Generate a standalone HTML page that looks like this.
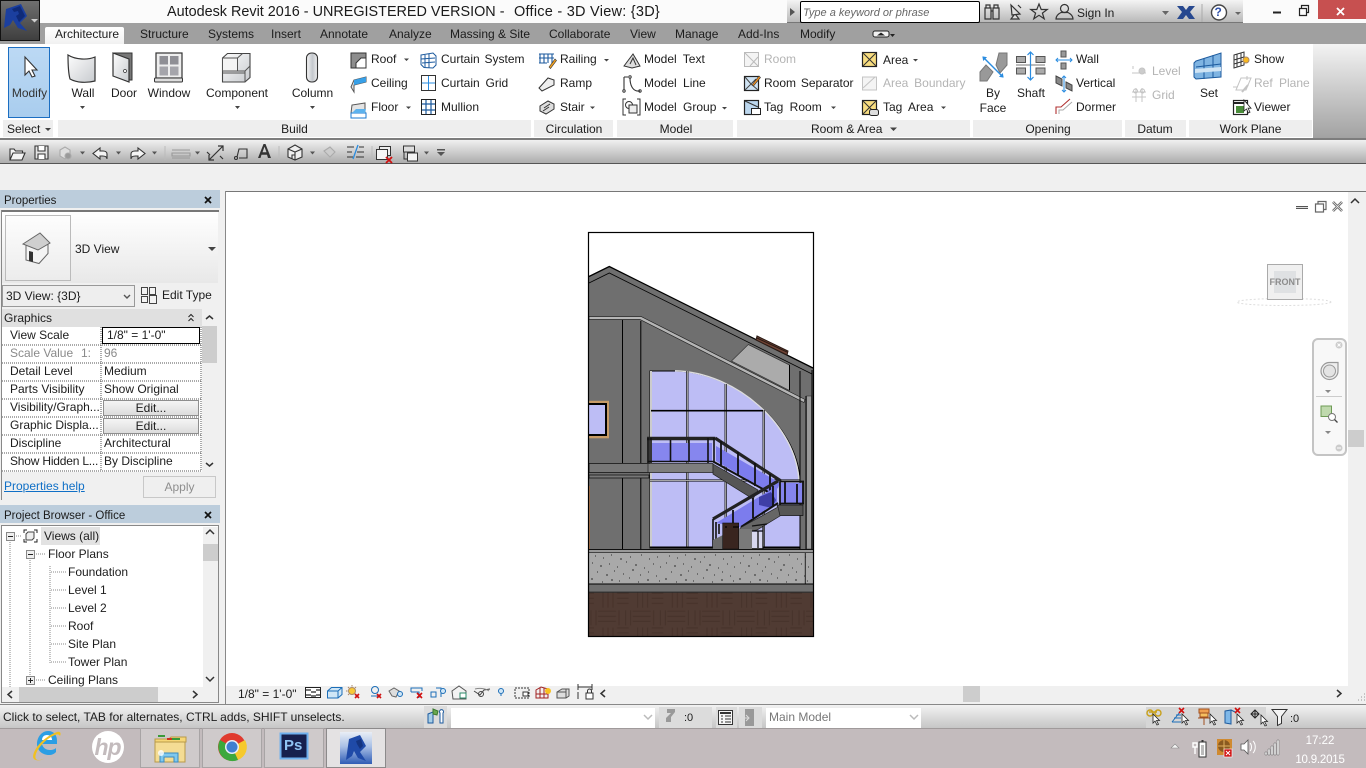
<!DOCTYPE html>
<html lang="en"><head><meta charset="utf-8"><title>Autodesk Revit 2016</title>
<style>
html,body{margin:0;padding:0;width:1366px;height:768px;overflow:hidden;background:#f0f0f0}
body{position:relative;font:12px/14px "Liberation Sans",sans-serif;color:#1c1c1c}
div{position:absolute}
svg{position:absolute;left:0;top:0}
i{position:absolute;font-style:normal;white-space:pre;line-height:14px;height:14px}
.g{color:#b4b4b4}.c{transform:translateX(-50%)}
.w{color:#fff}
</style></head><body>
<!-- backgrounds -->
<div style="left:0;top:0;width:1366px;height:23px;background:#fbfbfb"></div>
<div style="left:0;top:23px;width:1366px;height:21px;background:#a0a0a0"></div>
<div style="left:787px;top:0;width:456px;height:23px;background:linear-gradient(#f4f4f4,#b9b9b9);border-bottom:1px solid #777;box-sizing:border-box"></div>
<div style="left:800px;top:1px;width:180px;height:22px;background:#fff;border:1px solid #000;box-sizing:border-box;border-radius:2px"></div>
<div style="left:1318px;top:0;width:48px;height:19px;background:#c75050"></div>
<div style="left:45px;top:27px;width:79px;height:17px;background:linear-gradient(#fff,#f1f1f1);border-radius:2px 2px 0 0"></div>
<div style="left:0;top:44px;width:1366px;height:95px;background:#fff"></div>
<div style="left:1313px;top:44px;width:53px;height:94px;background:linear-gradient(#f3f3f3,#a2a2a2)"></div>
<!-- panel label strips -->
<div style="left:3px;top:120px;width:50px;height:17px;background:#eee"></div>
<div style="left:58px;top:120px;width:473px;height:17px;background:#eee"></div>
<div style="left:534px;top:120px;width:79px;height:17px;background:#eee"></div>
<div style="left:617px;top:120px;width:116px;height:17px;background:#eee"></div>
<div style="left:737px;top:120px;width:233px;height:17px;background:#eee"></div>
<div style="left:973px;top:120px;width:149px;height:17px;background:#eee"></div>
<div style="left:1125px;top:120px;width:61px;height:17px;background:#eee"></div>
<div style="left:1189px;top:120px;width:123px;height:17px;background:#eee"></div>
<div style="left:0;top:138px;width:1366px;height:2px;background:#7d7d7d"></div>
<div style="left:0;top:140px;width:1366px;height:23px;background:linear-gradient(#f0f0f0,#adadad)"></div>
<div style="left:0;top:163px;width:1366px;height:1px;background:#555"></div>
<div style="left:8px;top:47px;width:42px;height:71px;box-sizing:border-box;border:1px solid #1b6ec2;background:linear-gradient(#bcd9f4,#a9cdee)"></div>
<!-- Properties panel -->
<div style="left:0;top:190px;width:220px;height:18px;background:#bccddc"></div>
<div style="left:1px;top:210px;width:218px;height:2px;background:#777"></div>
<div style="left:1px;top:210px;width:1px;height:290px;background:#888"></div>
<div style="left:2px;top:212px;width:216px;height:71px;background:linear-gradient(#fff,#e8e8e8)"></div>
<div style="left:5px;top:215px;width:66px;height:66px;box-sizing:border-box;border:1px solid #bbb;background:linear-gradient(#fdfdfd,#ececec)"></div>
<div style="left:2px;top:285px;width:133px;height:22px;box-sizing:border-box;border:1px solid #999;background:#eee"></div>
<div style="left:2px;top:309px;width:200px;height:18px;background:#e0e0e0"></div>
<div style="left:2px;top:327px;width:200px;height:145px;background:#fff"></div>
<div style="left:202px;top:309px;width:16px;height:163px;background:#f0f0f0"></div>
<div style="left:202px;top:326px;width:15px;height:37px;background:#cdcdcd"></div>
<div style="left:102px;top:327px;width:98px;height:17px;box-sizing:border-box;border:1.5px solid #000;background:#fff"></div>
<div style="left:103px;top:400px;width:96px;height:16px;box-sizing:border-box;border:1.5px solid #8e8e8e;background:linear-gradient(#f5f5f5,#dcdcdc)"></div>
<div style="left:103px;top:418px;width:96px;height:16px;box-sizing:border-box;border:1.5px solid #8e8e8e;background:linear-gradient(#f5f5f5,#dcdcdc)"></div>
<div style="left:143px;top:476px;width:73px;height:22px;box-sizing:border-box;border:1px solid #c8c8c8;background:#efefef"></div>
<!-- Project browser -->
<div style="left:0;top:505px;width:220px;height:18px;background:#bccddc"></div>
<div style="left:1px;top:525px;width:218px;height:178px;box-sizing:border-box;border:1px solid #888;background:#fff"></div>
<div style="left:41px;top:527px;width:59px;height:18px;background:#e2e2e2"></div>
<div style="left:203px;top:527px;width:15px;height:160px;background:#f0f0f0"></div>
<div style="left:203px;top:544px;width:15px;height:17px;background:#cdcdcd"></div>
<div style="left:2px;top:687px;width:216px;height:15px;background:#f0f0f0"></div>
<div style="left:19px;top:687px;width:139px;height:15px;background:#cdcdcd"></div>
<!-- canvas -->
<div style="left:225px;top:191px;width:1141px;height:514px;background:#fff"></div>
<div style="left:225px;top:191px;width:1141px;height:1px;background:#777"></div>
<div style="left:225px;top:191px;width:1px;height:513px;background:#888"></div>
<div style="left:1348px;top:192px;width:18px;height:494px;background:#f0f0f0"></div>
<div style="left:1348px;top:430px;width:16px;height:17px;background:#cdcdcd"></div>
<div style="left:226px;top:686px;width:1140px;height:18px;background:#f0f0f0"></div>
<div style="left:963px;top:686px;width:17px;height:16px;background:#cdcdcd"></div>
<div style="left:1312px;top:338px;width:35px;height:118px;box-sizing:border-box;border:2px solid #c4c4c4;border-radius:6px;background:#f8f8f8"></div>
<!-- status -->
<div style="left:0;top:704px;width:1366px;height:1px;background:#888"></div>
<div style="left:0;top:705px;width:1366px;height:23px;background:linear-gradient(#f2f2f2,#c6c6c6)"></div>
<div style="left:424px;top:706px;width:23px;height:22px;background:#dcdcdc"></div>
<div style="left:451px;top:708px;width:204px;height:20px;background:#fff"></div>
<div style="left:659px;top:707px;width:53px;height:21px;background:#dcdcdc"></div>
<div style="left:716px;top:707px;width:21px;height:21px;background:#dcdcdc"></div>
<div style="left:739px;top:707px;width:23px;height:21px;background:#dcdcdc"></div>
<div style="left:766px;top:708px;width:155px;height:20px;background:#fff"></div>
<div style="left:1146px;top:707px;width:120px;height:21px;background:#d6d6d6"></div>
<!-- taskbar -->
<div style="left:0;top:728px;width:1366px;height:40px;background:#c3bbbd;border-top:1px solid #a09a9b;box-sizing:border-box"></div>
<div style="left:140px;top:728px;width:60px;height:40px;box-sizing:border-box;border:1px solid #a8a4a5;background:#cfcacb"></div>
<div style="left:202px;top:728px;width:60px;height:40px;box-sizing:border-box;border:1px solid #a8a4a5;background:#cfcacb"></div>
<div style="left:264px;top:728px;width:60px;height:40px;box-sizing:border-box;border:1px solid #a8a4a5;background:#cfcacb"></div>
<div style="left:326px;top:728px;width:60px;height:40px;box-sizing:border-box;border:1px solid #8c8a8b;background:#e4e2e3"></div>

<svg width="1366" height="768" viewBox="0 0 1366 768" fill="none">
<defs>
<linearGradient id="ab" x1="0" y1="0" x2="0" y2="1"><stop offset="0" stop-color="#707070"/><stop offset="1" stop-color="#3e3e3e"/></linearGradient>
<linearGradient id="wh" x1="0" y1="0" x2="1" y2="1"><stop offset="0" stop-color="#fdfdfd"/><stop offset="1" stop-color="#c8cbcf"/></linearGradient>
<linearGradient id="col" x1="0" y1="0" x2="1" y2="0"><stop offset="0" stop-color="#f7f7f7"/><stop offset=".55" stop-color="#c3c7cc"/><stop offset="1" stop-color="#f0f0f0"/></linearGradient>
<linearGradient id="rv" x1="0" y1="0" x2="0" y2="1"><stop offset="0" stop-color="#e9eef6"/><stop offset=".45" stop-color="#a9c0e6"/><stop offset="1" stop-color="#2f5cb5"/></linearGradient>
<pattern id="parq" x="588" y="592.3" width="34.67" height="34.67" patternUnits="userSpaceOnUse">
<path d="M15 .5v15M20 .5v15M25 .5v15M29 1h19M-6 1h12M29 6h19M-6 6h12M29 11h19M-6 11h12M10 19h18M10 24h18M10 29h18M31 18v15M3 18v15M-2 18v15M8 18v15M36 18v15" stroke="#46322a" stroke-width="1"/>
</pattern>
<pattern id="spk" x="589" y="553" width="74" height="31" patternUnits="userSpaceOnUse">
<path d="M6 3h1M14 5h1M22 2h1M31 6h2M41 4h1M52 2h1M60 6h1M68 4h1M3 10h1M11 13h2M20 11h1M28 14h1M37 9h1M46 12h2M55 15h1M64 11h1M71 14h1M8 19h1M17 22h2M25 18h1M34 21h1M43 17h2M51 22h1M59 19h1M67 23h1M2 26h2M13 29h1M22 27h2M30 28h1M40 25h1M49 29h1M58 27h2M70 28h1" stroke="#2e2e2e" stroke-width="1"/>
</pattern>
</defs>

<!-- app button -->
<rect x=".5" y=".5" width="39" height="40" fill="url(#ab)" stroke="#111"/>
<path d="M6 9 21 4l6 12-7 7 7 8-9-3-5-8-3 5-6 3z" fill="#1b3f9f"/><path d="M12 9l8-3 5 10-6 6-3-6 3-2-1-3-4 1z" fill="#0f2a78"/>
<path d="M31 19h7l-3.500 3.500z" fill="#cfcfcf"/>

<!-- window controls -->
<path d="M1273 12.500h8" stroke="#222" stroke-width="2"/>
<path d="M1299.500 8.500h7v7h-7zM1301.500 8V5.500h7v7H1307" stroke="#222" stroke-width="1.200"/>
<path d="M1337 8l7 7M1344 8l-7 7" stroke="#fff" stroke-width="1.800"/>

<!-- info bar icons -->
<path d="M790 8l5 4-5 4z" fill="#555"/>
<g stroke="#333" stroke-width="1.200">
<path d="M985 8h6v11h-6zM993 8h6v11h-6zM986 8V5h4v3M994 8V5h4v3M991 11h2"/>
<path d="M1011 5l9 9-8 1zM1014 15l-3 4h8l-3-4M1018 5l3 3" fill="#ddd"/>
<path d="M1039 4l2.200 5.500h6l-4.800 3.600 1.800 5.700-5.200-3.500-5.200 3.500 1.800-5.700-4.800-3.600h6z"/>
<circle cx="1064.500" cy="8.500" r="4"/><path d="M1056 19c0-4 4-6 5-6.500h7c1 .5 5 2.500 5 6.500z"/>
</g>
<path d="M1162 11h7l-3.500 4z" fill="#666"/>
<path d="M1177 6h6l3 4 3-4h6l-5 6 5 7h-6l-3-4-3 4h-6l5-7z" fill="#27488f"/>
<path d="M1202 4v18" stroke="#aaa"/>
<circle cx="1219" cy="12.500" r="7.500" fill="#fff" stroke="#444" stroke-width="1.400"/>
<path d="M1235 12h6l-3 3z" fill="#666"/>
<path d="M875 31h12a2 2 0 0 1 2 2v2a2 2 0 0 1-2 2h-12a2 2 0 0 1-2-2v-2a2 2 0 0 1 2-2z" fill="#f2f2f2" stroke="#222"/><path d="M877 35.500l4-3 4 3z" fill="#222"/><path d="M890 34h5l-2.500 3z" fill="#222"/>

<!-- Modify cursor -->
<path d="M25 57v18l4-4 3 6 3-1-3-6h5z" fill="#fff" stroke="#333" stroke-width="1.100"/>

<!-- Wall -->
<path d="M68 55c8 5 20 5 27 2v24c-8 2-18 2-25-2-2-7-2-16-2-24z" fill="url(#wh)" stroke="#333" stroke-width="1.200"/>
<!-- Door -->
<path d="M113 53h19v27h-3" fill="#777" stroke="#333"/><path d="M113 53l16 6v23l-16-6z" fill="url(#wh)" stroke="#333" stroke-width="1.200"/><circle cx="125" cy="71" r="1.500" fill="#fff" stroke="#333" stroke-width=".7"/>
<!-- Window -->
<rect x="156" y="53" width="26" height="25" fill="#eee" stroke="#333" stroke-width="1.200"/><rect x="159.500" y="56" width="8.500" height="8.500" fill="#8f8f95"/><rect x="170" y="56" width="8.500" height="8.500" fill="#8f8f95"/><rect x="159.500" y="66.500" width="8.500" height="9" fill="#a5a5ab"/><rect x="170" y="66.500" width="8.500" height="9" fill="#a5a5ab"/><rect x="154.500" y="78" width="28" height="4" rx="1" fill="#ddd" stroke="#333"/>
<!-- Component -->
<path d="M222.500 58l5-4.500h22.500v24l-5 4.500h-22.500z" fill="url(#wh)" stroke="#444" stroke-width="1.100"/><path d="M222.500 58h15v13h-15zM237.500 58l5-4.500" fill="#f4f4f4" stroke="#555"/><path d="M237.500 58v13h7.500v11M245 71l5-5M222.500 73h22" stroke="#555"/>
<!-- Column -->
<rect x="306.500" y="53" width="11" height="29" rx="5" fill="url(#col)" stroke="#333" stroke-width="1.100"/>

<!-- roof/ceiling/floor -->
<path d="M351 53h15v5h-5l-5 5v5h-5z" fill="#8d8d8d" stroke="#333"/><path d="M356 63v5h10V53" stroke="#333"/>
<path d="M351 87l3-7 12-3v5l-12 3v7z" fill="#e4e4e4" stroke="#555"/><path d="M354 80l12-3v5l-12 3z" fill="#37a0e8"/>
<path d="M351 113l1-8 13-2v9z" fill="#e4e4e4" stroke="#555"/><path d="M351 113h15v5h-15z" fill="#fff" stroke="#1a78d0"/><path d="M352 113l4-4h10l-1 4z" fill="#5cb2ee"/>
<!-- curtain -->
<g stroke="#1c5a9e" fill="none">
<path d="M421 55l12-2 3 3v9l-3 3-9-.5-3-3zM425 55v13M429 54v14M421 59l14-1M422 63l13-1"/>
<rect x="421.500" y="75.500" width="14" height="15" fill="#fff" stroke="#333"/><path d="M428.500 76v14M422 83h13" stroke="#2a8ce0"/>
<rect x="421.500" y="99.500" width="14" height="15" fill="#fff" stroke="#222"/><path d="M426 100v14M431 100v14M422 104h13M422 110h13" stroke="#1c5a9e" stroke-width="1.200"/>
</g>
<!-- circulation -->
<path d="M539 54h15M540 54v9M544 54v9M548 54v9M552 54v9M539 58h15M539 63h8" stroke="#1c5a9e" stroke-width="1.100"/><path d="M549 67l6-8 1.500 1.500-6 8z" fill="#f0a020" stroke="#333" stroke-width=".6"/>
<path d="M539 88l9-10 6 2v5l-12 6z" fill="#eee" stroke="#333"/>
<path d="M540 106l8-5 6 3v5l-8 5-6-3zM544 108l6-4M543 111l6-4" fill="#ddd" stroke="#333"/>
<!-- model -->
<path d="M624 66l9-12 7 12-8 2z" fill="#ddd" stroke="#333"/><path d="M630 64l3-6 3 7" stroke="#333"/>
<path d="M624 77v13M624 77h4M640 91c-8 1-10-7-10-13" stroke="#333" stroke-width="1.100"/><circle cx="624" cy="91" r="1.200" stroke="#333"/><circle cx="630" cy="77" r="1.200" stroke="#333"/><circle cx="640" cy="91" r="1.200" stroke="#333"/>
<path d="M626 99h-3v16h3M637 99h3v16h-3" stroke="#333"/><circle cx="629" cy="105" r="3.500" stroke="#333"/><rect x="629" y="105" width="8" height="8" fill="#eee" stroke="#333"/>
<!-- room & area -->
<g stroke="#bbb"><rect x="744.500" y="52.500" width="14" height="14" fill="#f4f4f4"/><path d="M745 53l13 13M758 57l-8 9"/></g>
<rect x="744.500" y="76.500" width="14" height="14" fill="#cfe3f3" stroke="#222" stroke-width="1.200"/><path d="M745 90l6-6 7 6M745 77l6 7 5-5" stroke="#444"/><path d="M752 85l7-9 1.500 1.500-7 8.500z" fill="#f09020" stroke="#333" stroke-width=".6"/>
<rect x="744.500" y="100.500" width="14" height="14" fill="#bcd7ee" stroke="#222" stroke-width="1.200"/><path d="M745 101l13 6" stroke="#333"/><rect x="751.500" y="108.500" width="9" height="6" fill="#fff" stroke="#222"/>
<rect x="862.500" y="52.500" width="14" height="14" fill="#f8dd80" stroke="#222" stroke-width="1.200"/><path d="M863 53l13 13M876 53l-13 13" stroke="#333"/>
<g stroke="#c4c4c4"><rect x="862.500" y="77" width="14" height="13" fill="#f4f4f4"/><path d="M863 88l12-11"/></g>
<rect x="862.500" y="100.500" width="14" height="14" fill="#f8dd80" stroke="#222" stroke-width="1.200"/><path d="M863 101l13 13M876 101l-13 13" stroke="#333"/><rect x="869.500" y="109.500" width="9" height="6" rx="2" fill="#ddd" stroke="#222"/>
<!-- opening -->
<path d="M980 72l6-7 7 7-6 9h-7zM996 65l3-12h8v12l-7 8z" fill="#999" stroke="#777"/><path d="M983 57l20 20" stroke="#2a8ce0" stroke-width="1.400"/><path d="M983 57l3 .5-2.500 2.500zM1003 77l-3-.5 2.500-2.500z" fill="#2a8ce0" stroke="#2a8ce0"/>
<rect x="1016.500" y="56.500" width="9" height="6" fill="#aaa" stroke="#555"/><rect x="1036" y="56.500" width="9" height="6" fill="#aaa" stroke="#555"/><rect x="1016.500" y="68" width="9" height="6" fill="#aaa" stroke="#555"/><rect x="1036" y="68" width="9" height="6" fill="#aaa" stroke="#555"/>
<path d="M1016 65h29" stroke="#bbb" stroke-width="2"/><path d="M1030.500 52v28M1027.500 55l3-3 3 3M1027.500 77l3 3 3-3" stroke="#2a8ce0" stroke-width="1.200"/>
<path d="M1061 51h5v6h-5zM1061 63h5v6h-5z" fill="#999" stroke="#555"/><path d="M1056 60h16M1058 58l-2 2 2 2M1070 58l2 2-2 2" stroke="#2a8ce0"/>
<path d="M1056 76l6 3v7l-6-3zM1066 82l6 3v6l-6-3z" fill="#888" stroke="#444"/><path d="M1064 76v16M1062 78l2-2 2 2M1062 90l2 2 2-2" stroke="#2a8ce0"/>
<path d="M1056 114v-7h5l9-8" stroke="#b03030" stroke-width="1.100"/><path d="M1059 114v-4h4l9-8" stroke="#aaa"/>
<!-- datum -->
<g stroke="#c4c4c4"><path d="M1132 73h14M1133 66v3"/><circle cx="1142" cy="71" r="3" fill="#ccc"/><path d="M1132 92h14M1132 97h14M1136 88v14M1142 88v14"/><circle cx="1135.500" cy="91" r="2"/><circle cx="1142.500" cy="91" r="2"/></g>
<!-- work plane -->
<path d="M1196 61l25-8v24l-25 2-2-2V63z" fill="#7fb4e2" stroke="#1c5a9e"/><path d="M1204 58v21M1213 55v23M1196 67l25-3M1196 72l25-2" stroke="#1c5a9e"/><path d="M1195 69l26-2v4l-26 2z" fill="#d0e4f4"/>
<path d="M1234 55l10-3v13l-10 3zM1237 54v13M1241 53v13M1234 60l10-3M1234 64l10-3" stroke="#333"/><circle cx="1246" cy="60" r="3" fill="#f8b820" stroke="#a86"/>
<g stroke="#c4c4c4"><path d="M1236 90l5-12h10l-5 12zM1233 87h4M1247 76v4"/><path d="M1242 92l6-7" stroke-width="2"/></g>
<rect x="1233.500" y="100.500" width="14" height="14" fill="#fff" stroke="#222" stroke-width="1.200"/><path d="M1236 106h8v7h-8z" fill="#4a8c3a"/><path d="M1233 103h14" stroke="#222" stroke-width="2"/><path d="M1244 100v11l2.500-2 2 4 1.500-.8-2-4h3z" fill="#fff" stroke="#222" stroke-width=".8"/>

<!-- dropdown arrows ribbon -->
<g fill="#444">
<path d="M404 58.500h5l-2.500 2.500zM406 106.500h5l-2.500 2.500zM604 59h5l-2.500 2.500zM590 106.500h5l-2.500 2.500zM722 107h5l-2.500 2.500zM831 106.500h5l-2.500 2.500zM913 59h5l-2.500 2.500zM941 106.500h5l-2.500 2.500zM80 106h5l-2.500 3zM235 106h5l-2.500 3zM310 106h5l-2.500 3zM45 128h6l-3 3zM890 127.500h7l-3.500 3.500z"/>
</g>

<!-- QAT -->
<g stroke="#333" stroke-width="1.100">
<path d="M10 160v-11h4l1.500 2h7v2M10 160l3-7h12l-3 7z" fill="#f4f4f4"/>
<path d="M35 146h13v13h-13z" fill="#e4e4e4"/><path d="M38 146v5h7v-5M38 159v-5h7v5" fill="#fff"/>
<path d="M60 150l5-3 5 3v6l-5 3-5-3z" stroke="#aaa" fill="#ddd"/><circle cx="68" cy="156" r="3" fill="#999" stroke="#aaa"/>
<path d="M107 158v-4c0-2-2-3-4-3h-3v-3l-7 5.500 7 5.500v-3h2.500c2.500 0 4.500 1 4.500 3" fill="#f4f4f4"/>
<path d="M131 158v-4c0-2 2-3 4-3h3v-3l7 5.500-7 5.500v-3h-2.500c-2.500 0-4.500 1-4.500 3" fill="#f4f4f4"/>
<path d="M172 150h18M172 158h18M172 153h18v3h-18z" stroke="#999"/>
<path d="M209 160l14-14M209 155v5h5M218 146h5v5M207 152l3 3M220 156l3 3" stroke-width="1.200"/>
<circle cx="236" cy="158" r="1.500"/><path d="M237 157l2-8h8v9h-8"/>
</g>
<path d="M258 158l5.500-14h2l5.500 14h-3l-1-3.200h-5.500l-1 3.200zM262.500 152.300h4l-2-5.500z" fill="#333"/>
<g stroke="#333" stroke-width="1.100">
<path d="M288 149l7-4 7 4v8l-7 3-7-3z" fill="#eee"/><path d="M288 149l7 3 7-3M295 152v8M292 159v-4h3v5" />
<path d="M324 151l6-4 5 5-5 5z" stroke="#aaa" fill="#ccc"/>
<path d="M347 147h7M347 152h5M347 157h6M359 147h5M357 152h7M356 157h8"/>
</g>
<path d="M358 145l-5 14" stroke="#2a8ce0" stroke-width="1.300"/>
<g stroke="#333"><rect x="379.500" y="146.500" width="11" height="9" fill="#eee"/><rect x="376.500" y="149.500" width="11" height="10" fill="#f6f6f6"/><path d="M404 150h10v-4M404 150v9h9"/><rect x="403.500" y="146" width="11" height="6" fill="#ddd"/><rect x="407.500" y="153" width="10" height="8" fill="#f4f4f4"/></g>
<path d="M386 157l6 6M392 157l-6 6" stroke="#d01010" stroke-width="1.800"/>
<g fill="#555"><path d="M80 151.500h5l-2.500 3zM116 151.500h5l-2.500 3zM152 151.500h5l-2.500 3zM195 151.500h5l-2.500 3zM310 151.500h5l-2.500 3zM424 151.500h5l-2.500 3zM437 152h8l-4 4zM437 149h8v1.500h-8z"/></g>
<path d="M165 146v14M279 146v14M372 146v14" stroke="#bbb"/>

<!-- Properties extras -->
<path d="M205 197l6 6M211 197l-6 6M205 512l6 6M211 512l-6 6" stroke="#111" stroke-width="1.700"/>
<path d="M208 247h8l-4 4z" fill="#444"/>
<!-- house icon -->
<path d="M26 245v15l13 3.500 9-10v-10l-9 5z" fill="#f4f4f4" stroke="#666"/><path d="M23 244l17-11 10 10-12 7z" fill="#cfcfcf" stroke="#666"/><path d="M29 251v10l4 1v-10z" fill="#333"/>
<path d="M124 295l3 3 3-3" stroke="#555" stroke-width="1.400"/>
<g stroke="#444"><rect x="141.500" y="287.500" width="6" height="7" fill="#f4f4f4"/><rect x="149.500" y="287.500" width="6" height="7" fill="#f4f4f4"/><rect x="141.500" y="296.500" width="6" height="6" fill="#f4f4f4"/><rect x="149.500" y="295.500" width="7" height="8" fill="#f4f4f4"/></g>
<path d="M188.500 317l2.500-2.500 2.500 2.500M188.500 321l2.500-2.500 2.500 2.500" stroke="#222"/>
<path d="M206 319l3.500-3 3.500 3M206 463l3.500 3 3.500-3M1351 203l4-4 4 4M206 534l4-4 4 4M206 677l4 4 4-4" stroke="#333" stroke-width="1.500"/>
<g stroke="#555" stroke-dasharray="1 1">
<path d="M2 345h199M2 363h199M2 381h199M2 399h199M2 417h199M2 435h199M2 453h199M2 471h199M101 327v144M201 327v144"/>
</g>
<!-- browser tree -->
<g stroke="#888" stroke-dasharray="1 1"><path d="M10 542v145M30 560v115M50 566v97M16 536h6M36 554h10M51 572h15M51 590h15M51 608h15M51 626h15M51 644h15M51 662h15M36 680h10"/></g>
<rect x="6.500" y="532.500" width="8" height="8" fill="#eee" stroke="#888"/><path d="M8 536.500h5" stroke="#222"/>
<rect x="26.500" y="550.500" width="8" height="8" fill="#eee" stroke="#888"/><path d="M28 554.500h5" stroke="#222"/>
<rect x="26.500" y="676.500" width="8" height="8" fill="#eee" stroke="#888"/><path d="M28 680.500h5M30.500 678v5" stroke="#222"/>
<path d="M24 533v-3h3M34 530h3v3M24 539v3h3M34 542h3v-3" stroke="#222"/><path d="M26 534l2-2h6v6l-2 2h-6z" fill="#eee" stroke="#444"/>
<path d="M12 691l-4 3.500 4 3.500M193 691l4 3.500-4 3.500M605 690l-4 3.500 4 3.500M1337 690l4 3.500-4 3.500" stroke="#333" stroke-width="1.500"/>
<path d="M1358 700h1M1361 700h1M1364 700h1M1361 697h1M1364 697h1M1364 694h1" stroke="#999"/>

<!-- Building -->
<rect x="588.500" y="232.500" width="225" height="404" fill="#fff" stroke="#000"/>
<path d="M589 276.500 609.300 266.500 813 368V552H589z" fill="#6f6f6f"/>
<path d="M589 276.500 609.300 266.500 813 368" stroke="#000" stroke-width="1.300"/>
<path d="M589 283 609.300 273 812 374" stroke="#000" stroke-width=".8"/>
<path d="M748.300 344.500 789.500 365v25.500l-58-29.500z" fill="#ababab" stroke="#333" stroke-width=".7"/>
<path d="M789.500 365v25" stroke="#000"/>
<path d="M757 336l31 15-1 4-31-15z" fill="#6f4335" stroke="#2a1a14"/><path d="M757 338l30 14" stroke="#2a1a14"/>
<path d="M589 316.500h52l164 83-1 3-164-83H589z" fill="#b5b5b5" stroke="#222" stroke-width=".7"/>
<path d="M622.500 320v143M640.800 321v142M622.500 478v71M640.800 478v71" stroke="#000" stroke-width="1"/>
<!-- arched glass -->
<path d="M650 371h25C735 372 797 425 800 480v68H650z" fill="#bdbdf5" stroke="#000"/>
<path d="M675 370.800C735 372 797 425 799 482" stroke="#ddd" stroke-width="1.400"/>
<path d="M651 371v177" stroke="#ccc" stroke-width="2"/>
<path d="M687.300 371v177M725.700 384v164M763.700 410v138" stroke="#000" stroke-width="2.200"/>
<path d="M687.300 371v177M725.700 384v164M763.700 410v138" stroke="#ccc" stroke-width=".9"/>
<path d="M651 410.700h112" stroke="#000" stroke-width="1.600"/>
<path d="M650 480.500h150" stroke="#000" stroke-width="2"/><path d="M650 480.500h150" stroke="#ddd" stroke-width=".7"/>
<path d="M650 547.500h150" stroke="#000" stroke-width="2"/>
<path d="M800 371v178M806 396v153M812 370v180" stroke="#000"/>
<path d="M806.500 396h5v153h-5z" fill="#9a9a9a" stroke="#222" stroke-width=".6"/>
<!-- small left window -->
<rect x="588" y="400.800" width="21" height="37.500" fill="#c79b66"/><rect x="589" y="403" width="18" height="33" fill="#000"/><rect x="589" y="405" width="16" height="29" fill="#bdbdf5"/>
<path d="M589 486v63" stroke="#a8744c" stroke-width="2"/>
<!-- slabs -->
<path d="M589 463.500h60v9h-60zM589 475h60v3h-60z" fill="#777" stroke="#111" stroke-width=".8"/>
<path d="M648 463.500h65v9h-65z" fill="#7e7e7e" stroke="#222" stroke-width=".7"/>
<!-- upper rail -->
<rect x="652" y="443" width="60" height="18" fill="#8686ee"/>
<path d="M647 438.500h68" stroke="#222" stroke-width="3.400"/><path d="M648 438v25M651 438v25M670.500 440v21M689 440v21M708 438v25M714 438v25M648 461.500h66" stroke="#111" stroke-width="1.600"/>
<!-- upper flight -->
<path d="M713 464 758 490 753 499 713 474z" fill="#555" stroke="#222" stroke-width=".7"/>
<path d="M716 446 780 483 778 488 771 493 716 461z" fill="#7c7ced"/>
<path d="M715 438 781 481" stroke="#222" stroke-width="3.200"/>
<path d="M714 462 770 493" stroke="#111" stroke-width="2"/>
<path d="M721 441v24M738 452v23M755 463v23M770 474v19" stroke="#111" stroke-width="1.800"/>
<!-- landing -->
<rect x="781" y="483" width="22" height="21" fill="#8484ee"/>
<path d="M780 481.500h24M780 482v23M785 482v21M797 484v19M803 482v22M780 503.500h24" stroke="#111" stroke-width="1.800"/>
<path d="M777 505h26v10.500h-24z" fill="#565656" stroke="#111" stroke-width=".7"/>
<!-- lower flight -->
<path d="M716 523 777 486 777 502 740 527z" fill="#7c7ced"/>
<path d="M759 497l12-5 5 8-4 8-13-3z" fill="#3f3fa6"/>
<path d="M713 519 778 481" stroke="#222" stroke-width="3.200"/>
<path d="M741 527 778 503" stroke="#111" stroke-width="2"/>
<path d="M733 510v15M753 498v20M773 486v20" stroke="#111" stroke-width="1.800"/>
<path d="M740 528 778 507 780 516 757 530 740 533z" fill="#666" stroke="#222" stroke-width=".7"/>
<path d="M713 519v29M716 522v24M719 524v10" stroke="#111" stroke-width="1.600"/>
<!-- door etc -->
<path d="M713 540l10-5v14h-10z" fill="#6a6a6a"/>
<rect x="722.700" y="523" width="16" height="26" fill="#39251f" stroke="#111" stroke-width=".6"/>
<path d="M739 529h13v20h-13z" fill="#797979"/>
<path d="M752 532h11v16h-11z" fill="#d8d8f0"/>
<path d="M752 531h11M758 531v17M763 526v23M752 526l15-2" stroke="#111" stroke-width="1.300"/>
<path d="M725 527h2M733 527h6" stroke="#000" stroke-width="1.300"/>
<!-- ground -->
<rect x="589" y="549" width="224" height="4" fill="#999"/>
<path d="M589 549.500h224M589 552.800h224" stroke="#111" stroke-width=".9"/>
<rect x="589" y="553" width="224" height="31" fill="#a9a9a9"/><rect x="589" y="553" width="224" height="31" fill="url(#spk)"/>
<path d="M805.300 553v31" stroke="#222"/>
<rect x="589" y="584" width="224" height="8.300" fill="#707070"/>
<path d="M589 584h224M589 592.300h224" stroke="#000"/>
<rect x="589" y="592.800" width="224" height="43.200" fill="#503b33"/><rect x="589" y="592.800" width="224" height="43.200" fill="url(#parq)"/>
<rect x="588.500" y="232.500" width="225" height="404" stroke="#000" stroke-width="1.200"/>
<path d="M589 636.500h225" stroke="#000" stroke-width="1"/>

<!-- view cube -->
<ellipse cx="1284" cy="302" rx="47" ry="3.500" stroke="#ddd" stroke-dasharray="2 2"/>
<rect x="1267.500" y="264.500" width="35" height="35" fill="#f0f0f0" stroke="#aaa"/>
<rect x="1274" y="271" width="22" height="22" fill="#dfe1e3"/>
<path d="M1296 207.500h12" stroke="#555" stroke-width="3"/><path d="M1296 207.500h12" stroke="#ddd" stroke-width="1"/>
<path d="M1315.500 204h8v8h-8zM1318 204v-2.500h8v8h-2.500" stroke="#666" stroke-width="1.200"/>
<path d="M1333 202l9 9M1342 202l-9 9" stroke="#666" stroke-width="2.600"/><path d="M1333 202l9 9M1342 202l-9 9" stroke="#eee" stroke-width=".8"/>
<!-- nav bar -->
<circle cx="1339" cy="345" r="3.500" fill="#ccc"/><path d="M1337.500 343.500l3 3M1340.500 343.500l-3 3" stroke="#fff"/>
<path d="M1321 371a8.500 8.500 0 0 1 8.500-8.500h8.500v8.500a8.500 8.500 0 0 1-17 0z" fill="#eee" stroke="#999" stroke-width="1.200"/><circle cx="1329.500" cy="371" r="6" fill="#e4e4e4" stroke="#999"/>
<path d="M1325 390h6l-3 3zM1325 431h6l-3 3z" fill="#888"/><path d="M1316 396.500h26" stroke="#ccc"/>
<rect x="1321" y="406" width="10.500" height="10.500" fill="#bfd9ad" stroke="#6e9b55"/><circle cx="1332" cy="417" r="3.500" fill="#fff" stroke="#777"/><path d="M1334.500 419.500l3 3" stroke="#444" stroke-width="1.300"/>
<circle cx="1339" cy="448" r="3.500" fill="#ccc"/><path d="M1337 448h4" stroke="#fff"/>

<!-- view bar icons -->
<rect x="305.500" y="687.500" width="15" height="10" fill="#fff" stroke="#222"/><path d="M306 690h5M316 690h4M311 692h5M306 695h5M316 695h4M311 696h5" stroke="#777" stroke-width="2"/>
<path d="M327.500 691l4-3.500h10.500v7l-4 3.500H327.500zM327.500 691H338v7M338 691l4-3.500" fill="#cfe6f6" stroke="#1c6eb8"/>
<circle cx="352" cy="691" r="3.500" fill="#f8c838" stroke="#a86"/><path d="M352 685v1.500M346 691h1.500M348 687l1 1M356 687l-1 1M348 695l1-1" stroke="#a86"/><path d="M355 694l4 4M359 694l-4 4" stroke="#d01010" stroke-width="1.600"/>
<circle cx="375" cy="690" r="3.500" stroke="#1c6eb8"/><path d="M371 696h8" stroke="#1c6eb8"/><path d="M377 694l4 4M381 694l-4 4" stroke="#d01010" stroke-width="1.600"/>
<path d="M389 691l5-3 5 3-3 6-4-1z" fill="#ddd" stroke="#666"/><circle cx="400" cy="694" r="2.500" fill="#cfe6f6" stroke="#1c6eb8"/>
<path d="M411 692h8v6M414 688h8v3M411 692v-4h3" stroke="#1c6eb8"/><path d="M417 693l5 5M422 693l-5 5" stroke="#d01010" stroke-width="1.600"/>
<path d="M431 692h5v5h-5zM436 688h5v9" stroke="#1c6eb8"/><circle cx="443" cy="691" r="2.500" fill="#cfe6f6" stroke="#1c6eb8"/>
<path d="M452 691l7-5 7 5v8h-13z" fill="#f2f2f2" stroke="#555"/><rect x="460" y="693" width="6" height="5" fill="#fff" stroke="#2c8a6a"/>
<path d="M474 691l6 4 4-5 6-1" stroke="#444"/><circle cx="481" cy="694" r="2.500" stroke="#444"/><path d="M475 689c4-1 10-1 14 2" stroke="#888"/>
<circle cx="501" cy="691" r="2.500" fill="#cfe6f6" stroke="#1c6eb8"/><path d="M500 695h2" stroke="#1c6eb8"/>
<path d="M515 688h14v10h-14z" stroke="#333" stroke-dasharray="2 1"/><rect x="523" y="692" width="5" height="4" fill="#fff" stroke="#333"/>
<path d="M536 690l5-3 7 2v9h-12zM540 688v10M544 688v10M536 694h12" stroke="#a02020"/><circle cx="548" cy="691" r="3" fill="#f8c020"/>
<path d="M557 692l5-3h7v7l-3 2h-9z" fill="#ddd" stroke="#555"/><path d="M566 689v9M557 692h9" stroke="#555"/>
<path d="M578 687h14M578 684v6M592 684v6M578 692v7" stroke="#333"/><rect x="586" y="693" width="7" height="6" fill="#fff" stroke="#333"/><path d="M587.500 693v-2a2 2 0 0 1 4 0v2" stroke="#333"/>

<!-- status icons -->
<path d="M428 714l5-2v11h-5z" fill="#a8cfe8" stroke="#1c5a9e"/><path d="M433 709l5 2-1 4-4-1z" fill="#6aa84f" stroke="#3c7a30"/><path d="M440 713a2 2 0 1 1 3 0v10h-3z" fill="#fff" stroke="#1c5a9e"/>
<path d="M644 715l4 4 4-4" stroke="#bbb" stroke-width="1.500"/><path d="M910 715l4 4 4-4" stroke="#bbb" stroke-width="1.500"/>
<path d="M667 709h8v3l-4 5v5h-5v-4l5-5h-4z" fill="#999"/>
<rect x="718.500" y="710.500" width="14" height="14" fill="#f6f6f6" stroke="#333"/><path d="M720 713h11" stroke="#333" stroke-width="2"/><path d="M721 716h2M725 716h6M721 719h2M725 719h6M721 722h2M725 722h6" stroke="#333"/>
<path d="M745 709h9v17h-9z" fill="#999"/><path d="M741 718h7M746 715l3 3-3 3" stroke="#ddd"/>
<path d="M1149 712h8M1150 710a3 3 0 0 1 3 3 3 3 0 0 1-3 3 3 3 0 0 1-3-3 3 3 0 0 1 3-3zM1158 710a3 3 0 0 1 3 3 3 3 0 0 1-3 3 3 3 0 0 1-3-3 3 3 0 0 1 3-3z" stroke="#c8a018" stroke-width="1.400"/>
<path d="M1153 714v9l2-2 2 4 1.500-.7-2-3.800h3z" fill="#fff" stroke="#222" stroke-width=".8"/>
<path d="M1172 722l8-10M1172 722h9M1174 718h7M1176 715h5" stroke="#1c6eb8"/><path d="M1179 708l5 5M1184 708l-5 5" stroke="#d01010" stroke-width="1.600"/>
<path d="M1182 714v9l2-2 2 4 1.500-.7-2-3.800h3z" fill="#fff" stroke="#222" stroke-width=".8"/>
<rect x="1199" y="709" width="10" height="4" fill="#f0a050" stroke="#a05020"/><rect x="1200" y="713" width="8" height="4" fill="#f6c060" stroke="#a05020"/><path d="M1198 718h12M1204 718v7" stroke="#a05020"/>
<path d="M1210 714v9l2-2 2 4 1.500-.7-2-3.800h3z" fill="#fff" stroke="#222" stroke-width=".8"/>
<path d="M1225 711l6-1v14l-6-1z" fill="#7fb8e8" stroke="#1c5a9e"/><path d="M1231 710l4 2" stroke="#1c5a9e"/><path d="M1235 708l5 5M1240 708l-5 5" stroke="#d01010" stroke-width="1.600"/>
<path d="M1237 714v9l2-2 2 4 1.500-.7-2-3.800h3z" fill="#fff" stroke="#222" stroke-width=".8"/>
<path d="M1255 710v8M1251 714h8M1253 712l2-2 2 2M1253 716l2 2 2-2M1253 712l-2 2 2 2M1257 712l2 2-2 2" stroke="#222"/>
<path d="M1261 715v9l2-2 2 4 1.500-.7-2-3.800h3z" fill="#fff" stroke="#222" stroke-width=".8"/>
<path d="M1272 709.500h15l-5.500 7v7l-4 2v-9z" fill="#f4f4f4" stroke="#333"/>

<!-- taskbar icons -->
<path d="M37 744c0-7 5-13 11-13s9 4 9 10v3H42c1 4 4 6 8 6 3 0 5-1 6-2v4c-2 2-4 3-7 3-7 0-12-5-12-11z" fill="#2b9ee4"/>
<path d="M42 740h10c0-3-2-5-5-5s-5 2-5 5z" fill="#fff"/>
<path d="M34 759c-4-4 6-21 23-27 4-1 4 2 3 4-1-2-3-2-5-1-12 5-22 19-19 24 2 2 6 1 9-1-4 3-9 3-11 1z" fill="#f0c020"/>
<circle cx="108" cy="747" r="16" fill="#fff"/>
<path d="M155 739h14l2-2h15v5h-31z" fill="#f6d676" stroke="#b89a4a"/><path d="M158 736h7M172 739h8" stroke="#3a9a3a" stroke-width="2"/><path d="M167 739h5" stroke="#d03020" stroke-width="2"/>
<path d="M155 742h30v20h-30z" fill="#f4dc94" stroke="#b89a4a"/><path d="M160 762v-9h18v9h-4v-5h-10v5z" fill="#7fc8ee" stroke="#3a8ac0"/><circle cx="161" cy="753" r="3" fill="#fff" opacity=".8"/>
<circle cx="232" cy="747" r="14" fill="#e03a2e"/>
<path d="M232 747l13-7a14 14 0 0 1-7 20z" fill="#f6c92c"/><path d="M232 747l6 13a14 14 0 0 1-19-9 14 14 0 0 1 1-11z" fill="#3ca83c"/>
<circle cx="232" cy="747" r="7" fill="#e8eef8"/><circle cx="232" cy="747" r="5.500" fill="#3f7fd0"/>
<rect x="280.500" y="733.500" width="27" height="25" fill="#16204e" stroke="#6fb0ee" stroke-width="2"/>
<rect x="340" y="732" width="32" height="32" fill="url(#rv)"/>
<path d="M349 739l11-4 6 11-6 6 6 9-8-3-4-7-2 5-6 4z" fill="#1f4aa8"/><path d="M356 741l5-2 2 7-3 3-3-5z" fill="#143480"/>
<!-- tray -->
<path d="M1171 748l4-4 4 4z" fill="#f4f4f4" stroke="#888" stroke-width=".6"/>
<path d="M1193 743h4v4h-4zM1195 747v7" stroke="#fff" stroke-width="1.400"/><rect x="1199" y="742" width="7" height="15" fill="#fff" stroke="#333"/><path d="M1202.500 740v2" stroke="#333" stroke-width="2"/><rect x="1201" y="745" width="3" height="10" fill="#bbb"/>
<rect x="1217" y="739" width="15" height="16" fill="#d08a30"/><circle cx="1224" cy="746" r="6" fill="#8a5a20"/><path d="M1218 746h12M1224 740v12" stroke="#e0b060"/><rect x="1224" y="749" width="8" height="8" fill="#d01818" stroke="#fff" stroke-width=".6"/><path d="M1226 751l4 4M1230 751l-4 4" stroke="#fff"/>
<path d="M1241 744h3l4-4v14l-4-4h-3z" fill="#fff" stroke="#555" stroke-width=".8"/><path d="M1250 743c2 2 2 6 0 8M1253 741c3 3 3 9 0 12" stroke="#fff"/>
<path d="M1265 752h2v3h-2zM1268 749h2v6h-2zM1271 746h2v9h-2zM1274 743h2v12h-2zM1277 740h2v15h-2z" fill="#f4f4f4" stroke="#666" stroke-width=".5"/>
</svg>

<!-- Title bar -->
<i style="left:167px;top:5px;font-size:14.400px;line-height:15px;color:#1a1a1a">Autodesk Revit 2016 - UNREGISTERED VERSION -</i>
<i style="left:514px;top:5px;font-size:14.500px;line-height:15px;letter-spacing:.25px;color:#1a1a1a">Office - 3D View: {3D}</i>
<i style="left:803px;top:6px;font-size:11px;font-style:italic;color:#666">Type a keyword or phrase</i>
<i style="left:1077px;top:6px">Sign In</i>
<i style="left:1214.500px;top:5px;font-weight:bold;font-size:12px;color:#2f50a8">?</i>
<!-- Tabs -->
<i style="left:55px;top:27px">Architecture</i><i style="left:140px;top:27px">Structure</i><i style="left:208px;top:27px">Systems</i><i style="left:271px;top:27px">Insert</i><i style="left:320px;top:27px">Annotate</i><i style="left:389px;top:27px">Analyze</i><i style="left:450px;top:27px">Massing &amp; Site</i><i style="left:549px;top:27px">Collaborate</i><i style="left:630px;top:27px">View</i><i style="left:675px;top:27px">Manage</i><i style="left:738px;top:27px">Add-Ins</i><i style="left:800px;top:27px">Modify</i>
<!-- Ribbon labels -->
<i class="c" style="left:29.500px;top:86px;color:#333">Modify</i>
<i class="c" style="left:83px;top:86px">Wall</i><i class="c" style="left:124px;top:86px">Door</i><i class="c" style="left:169px;top:86px">Window</i><i class="c" style="left:237px;top:86px">Component</i><i class="c" style="left:312.500px;top:86px">Column</i>
<i style="left:371px;top:52px">Roof</i><i style="left:371px;top:76px">Ceiling</i><i style="left:371px;top:100px">Floor</i>
<i style="left:441px;top:52px;word-spacing:1.500px">Curtain System</i><i style="left:441px;top:76px;word-spacing:2.500px">Curtain Grid</i><i style="left:441px;top:100px">Mullion</i>
<i style="left:560px;top:52px">Railing</i><i style="left:560px;top:76px">Ramp</i><i style="left:560px;top:100px">Stair</i>
<i style="left:644px;top:52px;word-spacing:3px">Model Text</i><i style="left:644px;top:76px;word-spacing:3px">Model Line</i><i style="left:644px;top:100px;word-spacing:3px">Model Group</i>
<i class="g" style="left:764px;top:52px">Room</i><i style="left:764px;top:76px;word-spacing:1.500px">Room Separator</i><i style="left:764px;top:100px;word-spacing:3px">Tag Room</i>
<i style="left:883px;top:53px">Area</i><i class="g" style="left:883px;top:76px;word-spacing:2.500px">Area Boundary</i><i style="left:883px;top:100px;word-spacing:3px">Tag Area</i>
<i class="c" style="left:993px;top:86px">By</i><i class="c" style="left:993px;top:101px">Face</i><i class="c" style="left:1031px;top:86px">Shaft</i>
<i style="left:1076px;top:52px">Wall</i><i style="left:1076px;top:76px">Vertical</i><i style="left:1076px;top:100px">Dormer</i>
<i class="g" style="left:1152px;top:64px">Level</i><i class="g" style="left:1152px;top:88px">Grid</i>
<i class="c" style="left:1209px;top:86px">Set</i><i style="left:1254px;top:52px">Show</i><i class="g" style="left:1254px;top:76px;word-spacing:3px">Ref Plane</i><i style="left:1254px;top:100px">Viewer</i>
<i style="left:7px;top:122px">Select</i><i class="c" style="left:294.500px;top:122px">Build</i><i class="c" style="left:574px;top:122px">Circulation</i><i class="c" style="left:676px;top:122px">Model</i><i style="left:811px;top:122px">Room &amp; Area</i><i class="c" style="left:1048px;top:122px">Opening</i><i class="c" style="left:1155px;top:122px">Datum</i><i class="c" style="left:1250.500px;top:122px">Work Plane</i>
<!-- Properties -->
<i style="left:4px;top:194px;font-size:11.500px">Properties</i>
<i style="left:75px;top:242px">3D View</i>
<i style="left:6px;top:289px">3D View: {3D}</i>
<i style="left:162px;top:288px">Edit Type</i>
<i style="left:4px;top:311px">Graphics</i>
<i style="left:10px;top:328px">View Scale</i><i style="left:107px;top:328px">1/8" = 1'-0"</i>
<i style="left:10px;top:346px;color:#8a8a8a">Scale Value</i><i style="left:81px;top:346px;color:#8a8a8a">1:</i><i style="left:104px;top:346px;color:#8a8a8a">96</i>
<i style="left:10px;top:364px">Detail Level</i><i style="left:104px;top:364px">Medium</i>
<i style="left:10px;top:382px">Parts Visibility</i><i style="left:104px;top:382px">Show Original</i>
<i style="left:10px;top:400px">Visibility/Graph...</i><i class="c" style="left:151px;top:401px">Edit...</i>
<i style="left:10px;top:418px">Graphic Displa...</i><i class="c" style="left:151px;top:419px">Edit...</i>
<i style="left:10px;top:436px">Discipline</i><i style="left:104px;top:436px">Architectural</i>
<i style="left:10px;top:454px;letter-spacing:-.2px">Show Hidden L...</i><i style="left:104px;top:454px">By Discipline</i>
<i style="left:4px;top:479px;color:#0f6fc6;text-decoration:underline">Properties help</i>
<i class="c" style="left:179.500px;top:480px;color:#8e8e8e">Apply</i>
<!-- Browser -->
<i style="left:4px;top:509px;font-size:11.500px">Project Browser - Office</i>
<i style="left:44px;top:529px">Views (all)</i><i style="left:48px;top:547px">Floor Plans</i><i style="left:68px;top:565px">Foundation</i><i style="left:68px;top:583px">Level 1</i><i style="left:68px;top:601px">Level 2</i><i style="left:68px;top:619px">Roof</i><i style="left:68px;top:637px">Site Plan</i><i style="left:68px;top:655px">Tower Plan</i><i style="left:48px;top:673px">Ceiling Plans</i>
<!-- view / cube -->
<i class="c" style="left:1285px;top:275px;font:bold 9px/14px 'Liberation Sans',sans-serif;color:#8c8c8c">FRONT</i>
<i style="left:238px;top:687px">1/8" = 1'-0"</i>
<!-- status -->
<i style="left:3px;top:710px">Click to select, TAB for alternates, CTRL adds, SHIFT unselects.</i>
<i style="left:684px;top:711px;font-size:11px">:0</i>
<i style="left:769px;top:710px;color:#777">Main Model</i>
<i style="left:1290px;top:712px;font-size:11px">:0</i>
<i class="c w" style="left:1320px;top:734px;font-size:11.500px">17:22</i>
<i class="c w" style="left:1320px;top:753px;font-size:11.500px;letter-spacing:-.2px">10.9.2015</i>
<i style="left:284px;top:738px;font:bold 15px/15px 'Liberation Sans',sans-serif;color:#8fc4f4">Ps</i>
<i class="c" style="left:107.500px;top:735px;height:24px;font:italic bold 23px/24px 'Liberation Sans',sans-serif;letter-spacing:-1px;color:#c3bbbd">hp</i>
</body></html>
